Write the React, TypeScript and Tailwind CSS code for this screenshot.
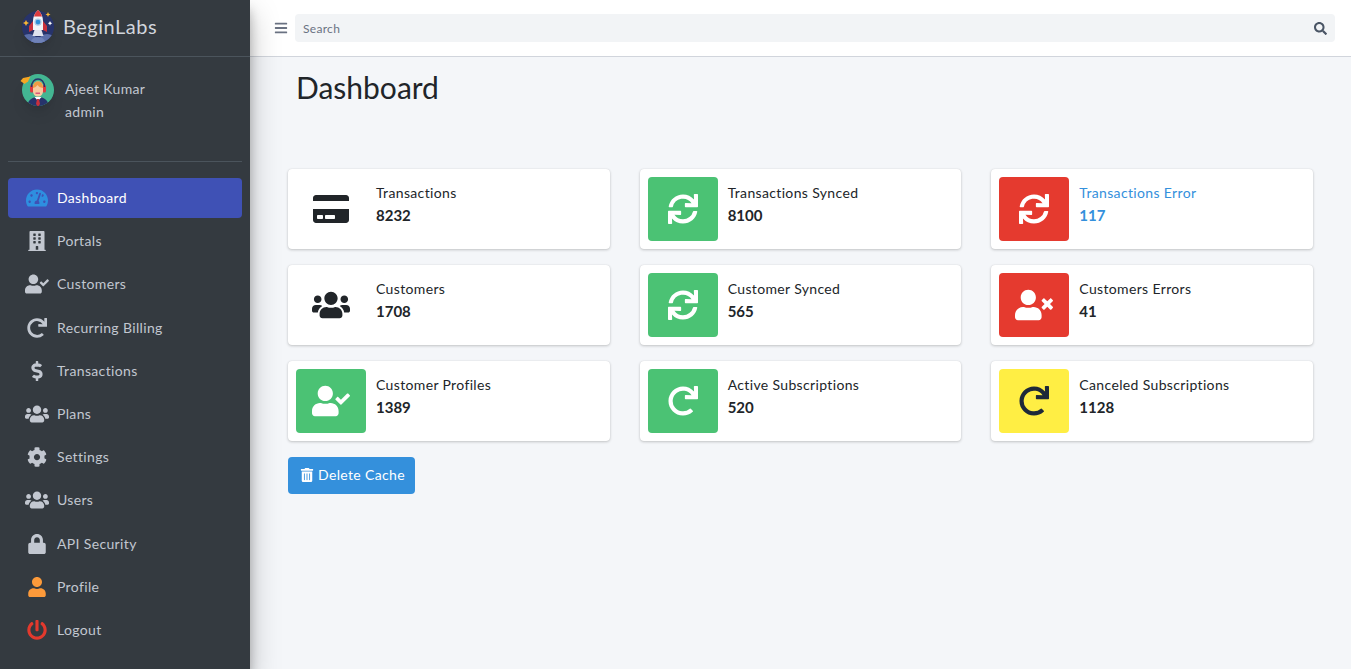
import React from "react";
import {
  FaBars, FaSearch, FaTachometerAlt, FaBuilding, FaUserCheck, FaRedo, FaDollarSign, FaUsers, FaCog,
  FaLock, FaUser, FaPowerOff, FaCreditCard, FaSync, FaUserTimes, FaTrashAlt,
} from "react-icons/fa";

const font = { fontFamily: '"Lato", "Noto Sans", sans-serif' };

function RocketLogo() {
  return (
    <svg viewBox="0 0 64 64" className="h-8 w-8 shrink-0 overflow-visible rounded-full shadow-lg">
      <defs>
        <clipPath id="logo-clip"><circle cx="32" cy="32" r="32" /></clipPath>
      </defs>
      <circle cx="32" cy="32" r="32" fill="#27336b" />
      <g clipPath="url(#logo-clip)">
        <ellipse cx="14" cy="58" rx="16" ry="12" fill="#5a6ea8" />
        <ellipse cx="50" cy="58" rx="16" ry="12" fill="#5a6ea8" />
        <ellipse cx="32" cy="62" rx="14" ry="10" fill="#6f82b8" />
      </g>
      <path d="M25 38h14l4 12H21z" fill="#dfe3ee" />
      <path d="M22 20l-8 10v12l8-4zM42 20l8 10v12l-8-4z" fill="#c8303c" />
      <path d="M32 -2c7 7 10 13 10 22v18H22V20c0-9 3-15 10-22z" fill="#f1f3f8" />
      <path d="M32 -2c4 4 7 8 8 13H24c1-5 4-9 8-13z" fill="#dc3a3f" />
      <circle cx="32" cy="22" r="6" fill="#2f8fd8" stroke="#a9c8e6" strokeWidth="2.5" />
      <path d="M8 18l2 4 4 2-4 2-2 4-2-4-4-2 4-2z" fill="#f7b733" />
      <path d="M52 2l1.5 3.5L57 7l-3.5 1.5L52 12l-1.5-3.5L47 7l3.5-1.5z" fill="#f7b733" />
      <path d="M56 20l1.5 3 3 1.5-3 1.5-1.5 3-1.5-3-3-1.5 3-1.5z" fill="#fff" />
    </svg>
  );
}

function AgentAvatar() {
  return (
    <svg viewBox="0 0 64 64" className="h-8 w-8 shrink-0 overflow-visible rounded-full shadow-lg">
      <defs>
        <clipPath id="agent-clip"><circle cx="32" cy="32" r="32" /></clipPath>
      </defs>
      <circle cx="32" cy="32" r="32" fill="#43b692" />
      <g clipPath="url(#agent-clip)">
        <path d="M10 66c1-14 10-20 22-20s21 6 22 20z" fill="#27336b" />
        <path d="M25 46h14l-7 8z" fill="#fff" />
        <path d="M30 50h4l2 10-4 6-4-6z" fill="#c8303c" />
      </g>
      <rect x="16" y="22" width="7" height="15" rx="3" fill="#dc3a3f" />
      <rect x="41" y="22" width="7" height="15" rx="3" fill="#dc3a3f" />
      <path d="M19 26c0-10 6-16 13-16s13 6 13 16" fill="none" stroke="#27336b" strokeWidth="3" />
      <path d="M22 26c0-7 4-11 10-11s10 4 10 11v8c0 7-4 11-10 11s-10-4-10-11z" fill="#f7c9a0" />
      <path d="M22 28c0-9 4-13 10-13s10 4 10 13c-6-1-9-3-11-6-2 3-5 5-9 6z" fill="#ef9b45" />
      <path d="M27 37h9v3h-9z" fill="#d9577a" />
      <path d="M-3 14l5-6 15-3 -5 10-7 5z" fill="#f5a623" />
    </svg>
  );
}

const nav = [
  { label: "Dashboard", Icon: FaTachometerAlt, cls: "text-[#2e8fe0]", size: "text-[22px]", active: true },
  { label: "Portals", Icon: FaBuilding, cls: "text-[#c2c7d0]", size: "text-xl" },
  { label: "Customers", Icon: FaUserCheck, cls: "text-[#c2c7d0]", size: "text-2xl" },
  { label: "Recurring Billing", Icon: FaRedo, cls: "text-[#c2c7d0]", size: "text-xl" },
  { label: "Transactions", Icon: FaDollarSign, cls: "text-[#c2c7d0]", size: "text-xl" },
  { label: "Plans", Icon: FaUsers, cls: "text-[#c2c7d0]", size: "text-2xl" },
  { label: "Settings", Icon: FaCog, cls: "text-[#c2c7d0]", size: "text-xl" },
  { label: "Users", Icon: FaUsers, cls: "text-[#c2c7d0]", size: "text-2xl" },
  { label: "API Security", Icon: FaLock, cls: "text-[#c2c7d0]", size: "text-xl" },
  { label: "Profile", Icon: FaUser, cls: "text-[#fd9a3a]", size: "text-xl" },
  { label: "Logout", Icon: FaPowerOff, cls: "text-[#e3392d]", size: "text-xl" },
];

const cards = [
  { label: "Transactions", value: "8232", Icon: FaCreditCard, box: "text-[#212529]", size: "text-4xl" },
  { label: "Transactions Synced", value: "8100", Icon: FaSync, box: "bg-[#4bc274] text-white", size: "text-3xl" },
  { label: "Transactions Error", value: "117", Icon: FaSync, box: "bg-[#e53a2f] text-white", size: "text-3xl", link: true },
  { label: "Customers", value: "1708", Icon: FaUsers, box: "text-[#212529]", size: "text-[38px]" },
  { label: "Customer Synced", value: "565", Icon: FaSync, box: "bg-[#4bc274] text-white", size: "text-3xl" },
  { label: "Customers Errors", value: "41", Icon: FaUserTimes, box: "bg-[#e53a2f] text-white", size: "text-[38px]" },
  { label: "Customer Profiles", value: "1389", Icon: FaUserCheck, box: "bg-[#4bc274] text-white", size: "text-[38px]" },
  { label: "Active Subscriptions", value: "520", Icon: FaRedo, box: "bg-[#4bc274] text-white", size: "text-3xl" },
  { label: "Canceled Subscriptions", value: "1128", Icon: FaRedo, box: "bg-[#ffee44] text-gray-800", size: "text-3xl" },
];

export default function App() {
  return (
    <div className="flex h-[669px] w-full overflow-hidden bg-[#f4f6f9]" style={font}>
      <aside className="z-10 flex w-[250px] shrink-0 flex-col bg-[#343a40] shadow-[0_14px_28px_rgba(0,0,0,0.25),0_10px_10px_rgba(0,0,0,0.22)]">
        <div className="box-content flex h-14 items-center gap-2.25 border-b border-[#4b545c] px-5.5 pb-0">
          <div className="-mt-0.5"><RocketLogo /></div>
          <span className="-mt-1 text-xl tracking-wide text-gray-300">BeginLabs</span>
        </div>
        <div className="mx-2 mt-px flex h-26 gap-2.75 border-b border-[#4b545c] px-3.5 pt-4">
          <AgentAvatar />
          <div className="pt-0.75 text-sm leading-[23px] tracking-wide text-[#c2c7d0]">
            <div>Ajeet Kumar</div>
            <div>admin</div>
          </div>
        </div>
        <nav className="mt-4 flex flex-col gap-[3.2px] px-2">
          {nav.map(({ label, Icon, cls, size, active }) => (
            <div key={label} className={`flex h-10 items-center rounded pl-4 ${active ? "bg-[#3f51b5] text-white" : "text-[#c2c7d0]"}`}>
              <div className={`mr-1.75 flex w-6.5 justify-center ${cls} ${size}`}><Icon /></div>
              <span className="text-sm tracking-wide">{label}</span>
            </div>
          ))}
        </nav>
      </aside>
      <div className="flex min-w-0 flex-1 flex-col">
        <header className="box-content flex h-14 items-center gap-1.75 border-b border-gray-300 bg-white pl-6 pr-4">
          <FaBars className="text-sm text-gray-500" />
          <div className="flex h-7 flex-1 items-center rounded bg-[#f2f4f6] px-2">
            <input placeholder="Search" className="flex-1 bg-transparent pt-0.5 text-xs tracking-wide outline-none placeholder:text-gray-500" />
            <FaSearch className="text-[13px] text-gray-600" />
          </div>
        </header>
        <main className="flex-1 px-9.5">
          <h1 className="ml-2 mt-3 text-3xl leading-9 text-[#212529]">Dashboard</h1>
          <div className="mt-16 grid grid-cols-3 gap-x-7.5 gap-y-4">
            {cards.map(({ label, value, Icon, box, size, link }) => (
              <div key={label} className="flex h-20 rounded bg-white p-2 shadow-[0_0_1px_rgba(0,0,0,0.13),0_1px_3px_rgba(0,0,0,0.2)]">
                <div className={`flex h-16 w-[70px] shrink-0 items-center justify-center rounded-sm ${size} ${box}`}><Icon /></div>
                <div className={`ml-2.5 pt-1 ${link ? "text-[#3490dc]" : "text-[#212529]"}`}>
                  <div className="text-sm leading-[23px] tracking-wide">{label}</div>
                  <div className="text-[15px] font-bold leading-[23px]">{value}</div>
                </div>
              </div>
            ))}
          </div>
          <button className="mt-4 flex h-9.25 items-center gap-1 rounded bg-[#3490dc] pb-0.5 pl-3 pr-2.5 text-sm tracking-wide text-white">
            <FaTrashAlt /> Delete Cache
          </button>
        </main>
      </div>
    </div>
  );
}
